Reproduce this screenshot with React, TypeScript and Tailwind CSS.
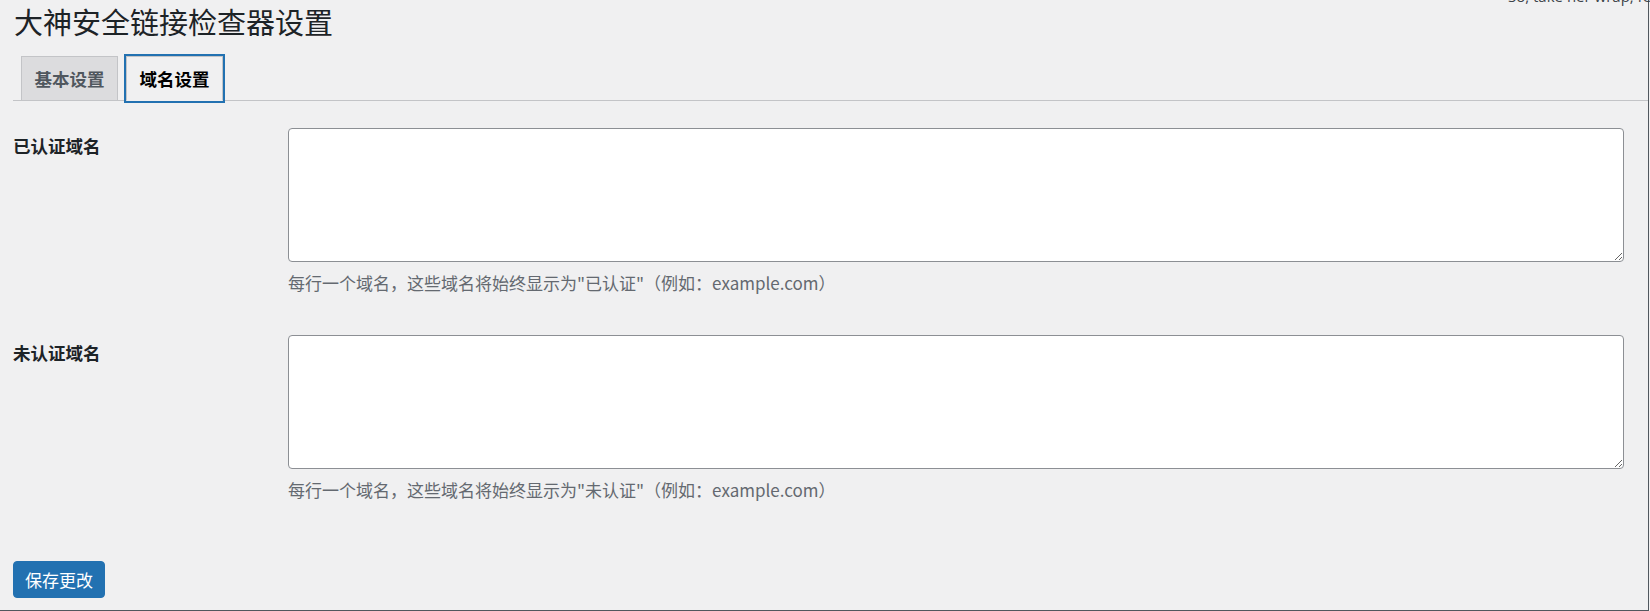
import React from 'react';

const FONT = { fontFamily: '"Noto Sans CJK SC", "Open Sans", sans-serif' };

const TABS = [
  { key: 'basic', label: '基本设置' },
  { key: 'domains', label: '域名设置' },
];

const FIELDS = [
  { key: 'verified', label: '已认证域名', help: '每行一个域名，这些域名将始终显示为"已认证"（例如：example.com）' },
  { key: 'unverified', label: '未认证域名', help: '每行一个域名，这些域名将始终显示为"未认证"（例如：example.com）' },
];

export default function App() {
  const activeTab = 'domains';

  return (
    <div className="relative w-[1650px] h-[611px] overflow-hidden bg-[#f0f0f1]" style={FONT}>
      {/* hello dolly lyric, cut off at the top */}
      <p
        className="absolute top-[-11px] left-[1508px] whitespace-nowrap text-[15px] leading-[15px] text-[#3c434a]"
        style={{ fontFamily: '"Open Sans", sans-serif' }}
      >
        So, take her wrap, fellas
      </p>

      <div className="w-[1649px] h-[611px] border-r border-b border-[#50575e] pl-[13px]">
        <h1 className="pt-[7px] pl-px text-[29px] leading-[29px] font-normal text-[#1d2327]">
          大神安全链接检查器设置
        </h1>

        {/* Tabs */}
        <div className="flex items-end pt-[20px] border-b border-[#c3c4c7]">
          {TABS.map((tab) => {
            const isActive = tab.key === activeTab;
            return (
              <a
                key={tab.key}
                href="#"
                className={`ml-[8px] -mb-px flex h-[45px] w-[97px] items-center justify-center border text-[17.5px] leading-none font-semibold ${
                  isActive
                    ? 'bg-[#f0f0f1] border-[#c3c4c7] border-b-[#f0f0f1] text-black shadow-[0_0_0_2px_#2271b1]'
                    : 'bg-[#dcdcde] border-[#c3c4c7] text-[#50575e]'
                }`}
              >
                {tab.label}
              </a>
            );
          })}
        </div>

        {/* Form rows */}
        {FIELDS.map((field, i) => (
          <div key={field.key} className={`flex ${i === 0 ? 'mt-[27px]' : 'mt-[44px]'}`}>
            <div className="w-[275px] shrink-0 pt-[9px] text-[17.5px] leading-none font-semibold text-[#1d2327]">
              {field.label}
            </div>
            <div className="flex-1 pr-[24px]">
              <textarea
                className="block w-full h-[134px] rounded-[4px] border border-[#8c8f94] bg-white px-[10px] py-[5px] text-[17px] text-[#2c3338] outline-none"
                style={FONT}
              />
              <p className="mt-[12px] text-[17px] leading-none text-[#646970]">{field.help}</p>
            </div>
          </div>
        ))}

        <button className="mt-[63px] flex h-[37px] w-[92px] items-center justify-center rounded-[4px] bg-[#2271b1] border border-[#2271b1] text-[17px] leading-none text-white">
          保存更改
        </button>
      </div>
    </div>
  );
}
